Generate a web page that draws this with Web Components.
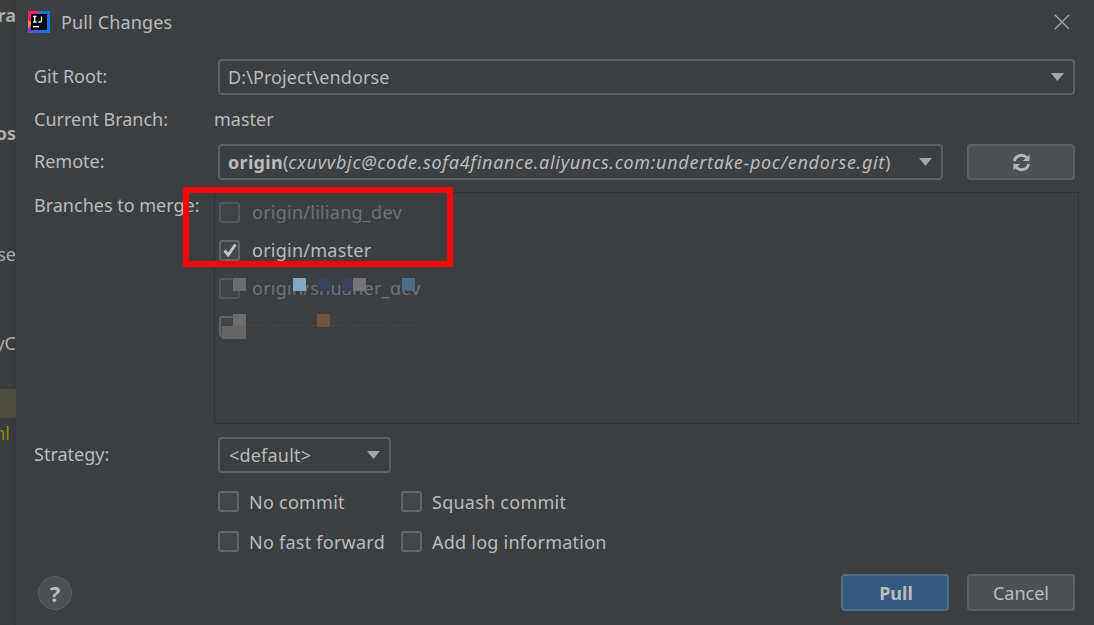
<!DOCTYPE html>
<html>
<head>
<meta charset="utf-8">
<style>
  html, body { margin: 0; height: 100%; overflow: hidden; background: #3c3f41; }
  body { font: 18px 'Noto Sans', sans-serif; color: #bbbbbb; }
  i.addr { letter-spacing: .7px; }
  b.name { letter-spacing: .3px; }
</style>
</head>
<body>
<pull-dialog>
  <ide-strip slot="strip"></ide-strip>
  <title-bar slot="title">Pull Changes</title-bar>

  <form-row label="Git Root:"><combo-box wide path>D:\Project\endorse</combo-box></form-row>
  <form-row label="Current Branch:" plain><span style="margin-left:-4px">master</span></form-row>
  <form-row label="Remote:">
    <combo-box wide><b class="name">origin</b>(<i class="addr">cxuvvbjc@code.sofa4finance.aliyuncs.com:undertake-poc/endorse.git</i>)</combo-box>
    <dlg-button refresh></dlg-button>
  </form-row>
  <form-row label="Branches to merge:" list>
    <branch-list>
      <branch-item dim>origin/liliang_dev</branch-item>
      <branch-item checked>origin/master</branch-item>
      <branch-item dim>origin/shuaner_dev</branch-item>
      <branch-item></branch-item>
    </branch-list>
  </form-row>
  <form-row label="Strategy:"><combo-box small>&lt;default&gt;</combo-box></form-row>
  <option-grid>
    <check-box>No commit</check-box>
    <check-box>Squash commit</check-box>
    <check-box>No fast forward</check-box>
    <check-box>Add log information</check-box>
  </option-grid>
  <dialog-footer slot="footer">
    <dlg-button primary>Pull</dlg-button>
    <dlg-button>Cancel</dlg-button>
  </dialog-footer>
</pull-dialog>

<script>
class PullDialog extends HTMLElement {
  constructor() {
    super();
    this.attachShadow({ mode: 'open' }).innerHTML = `
      <style>
        :host { display: flex; height: 625px; position: relative; }
        .main {
          flex: 1;
          display: flex;
          flex-direction: column;
          padding: 0 19px 14px 18px;
          min-width: 0;
        }
        .body { flex: 1; display: flex; flex-direction: column; }
        /* annotation drawn over the branch list */
        .mark {
          position: absolute;
          left: 183px;
          top: 187px;
          width: 270px;
          height: 80px;
          box-sizing: border-box;
          border: 6px solid #fe0000;
        }
      </style>
      <slot name="strip"></slot>
      <div class="main">
        <slot name="title"></slot>
        <div class="body"><slot></slot></div>
        <slot name="footer"></slot>
      </div>
      <div class="mark"></div>
    `;
  }
}

class IdeStrip extends HTMLElement {
  constructor() {
    super();
    this.attachShadow({ mode: 'open' }).innerHTML = `
      <style>
        :host {
          display: flex;
          flex-direction: column;
          align-items: flex-end;
          flex: none;
          width: 16px;
          overflow: hidden;
          background: #3a3c3e;
          box-shadow: inset -4px 0 4px -3px #333537;
          white-space: nowrap;
          line-height: 24px;
          color: #a9adb0;
        }
        span { display: block; }
        .hl { align-self: stretch; height: 29px; background: #4e4b41; margin-top: 34px; flex: none; }
      </style>
      <span style="margin-top:3px;font-weight:700">ra</span>
      <span style="margin-top:94px;font-weight:700">os</span>
      <span style="margin-top:97px">se</span>
      <span style="margin-top:65px">yC</span>
      <div class="hl"></div>
      <span style="margin-top:3px;margin-right:6px;color:#8c8c00">html</span>
    `;
  }
}

class TitleBar extends HTMLElement {
  constructor() {
    super();
    this.attachShadow({ mode: 'open' }).innerHTML = `
      <style>
        :host {
          display: flex;
          align-items: center;
          height: 43px;
          margin-left: -6px;
          margin-right: 5px;
          flex: none;
          letter-spacing: .15px;
        }
        .logo { display: block; margin-right: 11px; }
        .name { flex: 1; }
        .close { display: block; }
      </style>
      <svg class="logo" width="22" height="22" viewBox="0 0 22 22">
        <defs>
          <linearGradient id="g" x1="0" y1="0" x2="1" y2="1">
            <stop offset="0" stop-color="#fe2857"/><stop offset=".5" stop-color="#7a3fd0"/><stop offset="1" stop-color="#087cfa"/>
          </linearGradient>
        </defs>
        <rect width="22" height="22" fill="url(#g)"/>
        <path d="M0 0H9L0 9Z" fill="#fe2857"/>
        <path d="M0 9L4 12L0 18Z" fill="#ff8a1e"/>
        <path d="M11 0H22V22H11Z" fill="#087cfa" opacity=".75"/>
        <rect x="3" y="3" width="16" height="16" fill="#000"/>
        <path d="M5 5.500H8.500M6.750 5.500V11M5 11H8.500M13.500 5.500V9.800Q13.500 11 12 11H10.500" fill="none" stroke="#fff" stroke-width="1.300"/>
        <rect x="5" y="15" width="6" height="1.300" fill="#fff"/>
      </svg>
      <span class="name"><slot></slot></span>
      <svg class="close" width="16" height="16" viewBox="0 0 16 16">
        <path d="M1 1L15 15M15 1L1 15" stroke="#a8a9aa" stroke-width="1.300" fill="none"/>
      </svg>
    `;
  }
}

class FormRow extends HTMLElement {
  constructor() {
    super();
    const label = this.getAttribute('label');
    this.attachShadow({ mode: 'open' }).innerHTML = `
      <style>
        :host {
          display: grid;
          grid-template-columns: 184px 1fr;
          align-items: center;
          min-height: 36px;
          margin-top: 16px;
          flex: none;
        }
        :host([plain]) { margin-top: 6px; }
        :host([label="Remote:"]) { margin-top: 7px; }
        :host([list]) { align-items: start; margin-top: 12px; }
        :host([label="Strategy:"]) { margin-top: 13px; }
        .label { white-space: nowrap; line-height: 26px; padding-bottom: 2px; }
        :host([plain]) .label, :host([list]) .label { padding-bottom: 0; }
        .ctl { display: flex; align-items: center; gap: 24px; min-width: 0; }
      </style>
      <div class="label">${label}</div>
      <div class="ctl"><slot></slot></div>
    `;
  }
}

class ComboBox extends HTMLElement {
  constructor() {
    super();
    this.attachShadow({ mode: 'open' }).innerHTML = `
      <style>
        :host {
          display: flex;
          align-items: center;
          box-sizing: border-box;
          height: 36px;
          padding: 0 9px 0 8px;
          border: 2px solid #5e6060;
          border-radius: 4px;
          white-space: nowrap;
          overflow: hidden;
        }
        :host([wide]) { flex: 1; min-width: 0; }
        :host([path]) { letter-spacing: .1px; }
        :host([small]) { width: 173px; padding-left: 9px; letter-spacing: .2px; }
        .text { flex: 1; overflow: hidden; }
        svg { flex: none; display: block; }
      </style>
      <span class="text"><slot></slot></span>
      <svg width="13" height="8" viewBox="0 0 13 8"><path d="M0 0H13L6.500 8Z" fill="#a4a6a8"/></svg>
    `;
  }
}

class DlgButton extends HTMLElement {
  constructor() {
    super();
    this.attachShadow({ mode: 'open' }).innerHTML = `
      <style>
        :host {
          display: flex;
          align-items: center;
          justify-content: center;
          box-sizing: border-box;
          width: 108px;
          height: 37px;
          flex: none;
          background: #4c5052;
          border: 2px solid #5e6060;
          border-radius: 4px;
        }
        :host([refresh]) { height: 36px; }
        :host([primary]) {
          background: #365880;
          border-color: #4c708c;
          font-weight: 700;
          padding-left: 2px;
        }
        svg { display: block; }
      </style>
      ${this.hasAttribute('refresh') ? `
      <svg width="19" height="19" viewBox="0 0 20 20" fill="none">
        <path d="M2.500 8.500A7.500 7.500 0 0 1 15.500 5" stroke="#b4b6b8" stroke-width="3"/>
        <path d="M17.500 11.500A7.500 7.500 0 0 1 4.500 15" stroke="#b4b6b8" stroke-width="3"/>
        <path d="M18.500 1.500V8.500H11.500Z" fill="#b4b6b8"/>
        <path d="M1.500 18.500V11.500H8.500Z" fill="#b4b6b8"/>
      </svg>` : '<slot></slot>'}
    `;
  }
}

class BranchList extends HTMLElement {
  constructor() {
    super();
    this.attachShadow({ mode: 'open' }).innerHTML = `
      <style>
        :host {
          display: block;
          flex: 1;
          position: relative;
          box-sizing: border-box;
          height: 232px;
          margin: 0 -4px;
          border: 1px solid #323232;
        }
        /* redaction squares pasted over the picture */
        i { position: absolute; width: 13px; height: 13px; }
        .band { left: 37px; top: 85px; width: 165px; height: 7px; background: #3c3f41; }
        .dots {
          left: 37px;
          top: 132px;
          width: 170px;
          height: 1px;
          background: repeating-linear-gradient(90deg, #484b4d 0 3px, #414446 3px 7px, #3c3f41 7px 10px);
        }
      </style>
      <slot></slot>
      <i class="band"></i>
      <i class="dots"></i>
      <i style="left:18px;top:85px;background:#6d6d6d"></i>
      <i style="left:78px;top:85px;background:#7fa9c2"></i>
      <i style="left:103px;top:85px;background:#3b3f60"></i>
      <i style="left:127px;top:85px;background:#3b3f60"></i>
      <i style="left:138px;top:85px;background:#757575"></i>
      <i style="left:187px;top:85px;background:#4e6a85"></i>
      <i style="left:18px;top:121px;background:#6d6d6d"></i>
      <i style="left:7px;top:133px;width:24px;background:#666"></i>
      <i style="left:102px;top:121px;background:#6e5542"></i>
    `;
  }
}

class BranchItem extends HTMLElement {
  constructor() {
    super();
    this.attachShadow({ mode: 'open' }).innerHTML = `
      <style>
        :host {
          display: flex;
          align-items: center;
          gap: 12px;
          height: 38px;
          padding-left: 4px;
          letter-spacing: .25px;
        }
        :host([dim]) { color: #6f7173; }
        .box {
          box-sizing: border-box;
          width: 21px;
          height: 21px;
          border: 2px solid #636566;
          border-radius: 3px;
          background: #43474a;
          display: flex;
          align-items: center;
          justify-content: center;
        }
        :host([dim]) .box { border-color: #54575a; background: #3f4345; }
        svg { display: block; }
      </style>
      <div class="box">${this.hasAttribute('checked') ? `
        <svg width="14" height="14" viewBox="0 0 14 14"><path d="M1.500 7.500L5.200 12L12.500 1.500" fill="none" stroke="#c4c6c7" stroke-width="2.800"/></svg>` : ''}</div>
      <span><slot></slot></span>
    `;
  }
}

class OptionGrid extends HTMLElement {
  constructor() {
    super();
    this.attachShadow({ mode: 'open' }).innerHTML = `
      <style>
        :host {
          display: grid;
          grid-template-columns: 183px 1fr;
          grid-auto-rows: 40px;
          margin: 8px 0 0 184px;
          flex: none;
        }
      </style>
      <slot></slot>
    `;
  }
}

class CheckBox extends HTMLElement {
  constructor() {
    super();
    this.attachShadow({ mode: 'open' }).innerHTML = `
      <style>
        :host { display: flex; align-items: center; gap: 10px; white-space: nowrap; letter-spacing: .25px; }
        .box {
          box-sizing: border-box;
          width: 21px;
          height: 21px;
          border: 2px solid #636566;
          border-radius: 3px;
          background: #43474a;
        }
        span { padding-top: 2px; }
      </style>
      <div class="box"></div>
      <span><slot></slot></span>
    `;
  }
}

class DialogFooter extends HTMLElement {
  constructor() {
    super();
    this.attachShadow({ mode: 'open' }).innerHTML = `
      <style>
        :host { display: flex; align-items: center; gap: 18px; flex: none; }
        .help {
          box-sizing: border-box;
          width: 34px;
          height: 34px;
          margin-left: 4px;
          margin-right: auto;
          border: 1px solid #5e6060;
          border-radius: 50%;
          background: #4c5052;
          display: flex;
          align-items: center;
          justify-content: center;
          font-weight: 700;
          font-size: 22px;
        }
      </style>
      <div class="help">?</div>
      <slot></slot>
    `;
  }
}

customElements.define('pull-dialog', PullDialog);
customElements.define('ide-strip', IdeStrip);
customElements.define('title-bar', TitleBar);
customElements.define('form-row', FormRow);
customElements.define('combo-box', ComboBox);
customElements.define('dlg-button', DlgButton);
customElements.define('branch-list', BranchList);
customElements.define('branch-item', BranchItem);
customElements.define('option-grid', OptionGrid);
customElements.define('check-box', CheckBox);
customElements.define('dialog-footer', DialogFooter);
</script>
</body>
</html>
